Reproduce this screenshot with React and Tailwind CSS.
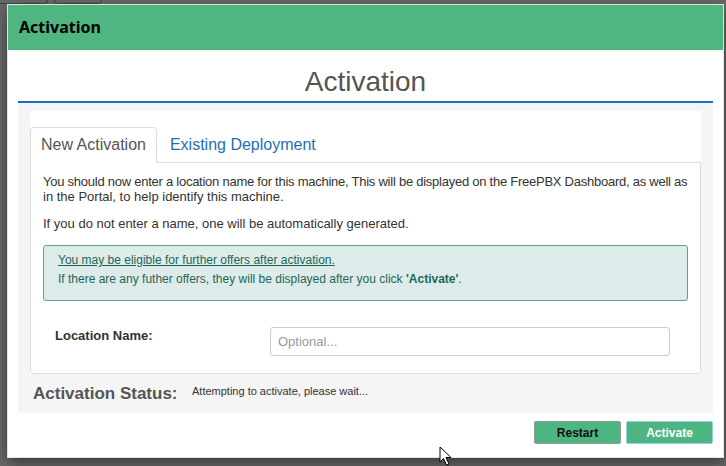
import React from 'react'

export default function App() {
  return (
    <div className="relative w-[726px] h-[466px] overflow-hidden bg-[#6b6b6b]" style={{ fontFamily: '"Liberation Sans", Arial, sans-serif' }}>
      {/* bits of the page behind the backdrop */}
      <div className="flex h-[4px] gap-[6px]">
        <div className="w-[48px] h-[4px] border-b border-r border-[#3f3f3f] rounded-br-[4px]" />
        <div className="w-[48px] h-[4px] border-b border-x border-[#3f3f3f] rounded-b-[4px]" />
      </div>

      <div className="ml-[7px] w-[717px] h-[454px] flex flex-col bg-white border border-[#e2e2e2] shadow-[0_5px_15px_rgba(0,0,0,0.5)]">
        {/* header */}
        <div className="h-[45px] shrink-0 flex items-center pl-[11px] pb-[2px] bg-[#4fb581]">
          <span className="text-[16px] font-bold text-black leading-[20px]" style={{ fontFamily: '"Noto Sans", sans-serif' }}>
            Activation
          </span>
        </div>

        {/* body */}
        <div className="flex-1 flex flex-col px-[10px]">
          <div className="mt-[16px] pb-[3px] text-center text-[28px] leading-[32px] text-[#555]">Activation</div>
          <div className="h-[2px] bg-[#1571c4]" />

          <div className="bg-[#f5f5f5] px-[12px] pt-[8px] h-[310px] flex flex-col">
            <div className="bg-white pt-[16px]">
              {/* tabs */}
              <div className="flex h-[36px] border-b border-[#ddd]">
                <div className="h-[36px] px-[10px] pt-[7px] border border-[#ddd] border-b-white rounded-t-[4px] bg-white text-[16px] leading-[20px] text-[#555]">
                  New Activation
                </div>
                <div className="ml-[2px] h-[35px] px-[11px] pt-[8px] text-[16px] leading-[20px] text-[#1f6fb5]">
                  Existing Deployment
                </div>
              </div>

              {/* tab content */}
              <div className="h-[211px] border-x border-b border-[#ddd] rounded-b-[4px] px-[12px] pt-[11px] text-[13px] leading-[15px] text-[#333]">
                <p className="mb-[12px]">
                  <span className="whitespace-nowrap tracking-[-0.25px]">You should now enter a location name for this machine, This will be displayed on the FreePBX Dashboard, as well as</span>
                  <br />
                  in the Portal, to help identify this machine.
                </p>
                <p className="mb-[14px]">If you do not enter a name, one will be automatically generated.</p>

                <div className="border border-[#62a488] bg-[#ddeceb] rounded-[3px] pl-[14px] pt-[7px] pb-[13px] text-[12px] text-[#1f6657]">
                  <div className="underline">You may be eligible for further offers after activation.</div>
                  <div className="mt-[4px]">
                    If there are any futher offers, they will be displayed after you click <b>'Activate'</b>.
                  </div>
                </div>

                <div className="flex items-start mt-[26px] pl-[12px]">
                  <label className="w-[215px] pt-[1px] font-bold text-[#333]">Location Name:</label>
                  <input
                    placeholder="Optional..."
                    className="w-[400px] h-[29px] border border-[#ccc] rounded-[3px] px-[7px] text-[13px] text-[#555] placeholder:text-[#999] outline-none"
                  />
                </div>
              </div>
            </div>

            {/* status */}
            <div className="flex items-start pl-[3px] pt-[10px]">
              <div className="w-[159px] text-[17px] leading-[20px] font-bold text-[#555]">Activation Status:</div>
              <div className="mt-[1px] text-[11px] leading-[13px] text-[#333]">Attempting to activate, please wait...</div>
            </div>
          </div>

          {/* footer buttons */}
          <div className="flex justify-end gap-[5px] mt-[8px]">
            <button className="w-[87px] h-[23px] bg-[#4db582] border border-[#8e9c95] rounded-[2px] text-[12px] font-bold text-[#111] leading-[14px] pt-[1px]">
              Restart
            </button>
            <button className="w-[87px] h-[23px] bg-[#4db582] border border-[#93cfe0] rounded-[2px] text-[12px] font-bold text-white leading-[14px]">
              Activate
            </button>
          </div>
        </div>
      </div>

      {/* mouse cursor */}
      <svg className="absolute left-[439px] top-[446px]" width="14" height="21" viewBox="0 0 14 21">
        <path d="M1 1 L1 16 L4.5 12.5 L7.5 19 L10 18 L7 11.5 L12 11.5 Z" fill="white" stroke="black" strokeWidth="1" strokeLinejoin="miter" />
      </svg>
    </div>
  )
}
